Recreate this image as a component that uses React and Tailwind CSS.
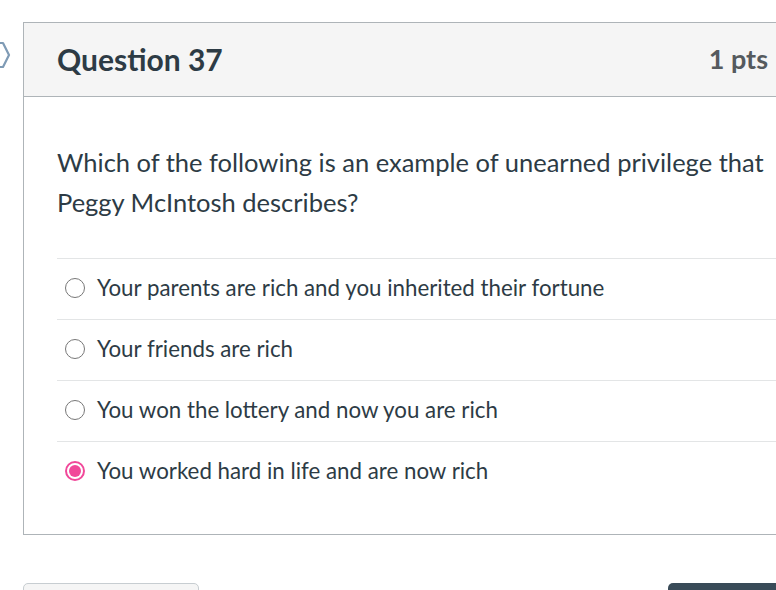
import { useState } from 'react'

const answers = [
  'Your parents are rich and you inherited their fortune',
  'Your friends are rich',
  'You won the lottery and now you are rich',
  'You worked hard in life and are now rich',
]

function Radio({ checked }) {
  return checked ? (
    <span className="w-[20px] h-[20px] rounded-full border-2 border-[#f1489a] flex items-center justify-center shrink-0">
      <span className="w-[12px] h-[12px] rounded-full bg-[#f1489a]" />
    </span>
  ) : (
    <span className="w-[20px] h-[20px] rounded-full border border-[#777] bg-white shrink-0" />
  )
}

export default function App() {
  const [picked, setPicked] = useState(3)

  return (
    <div
      className="relative w-[776px] h-[590px] overflow-hidden bg-white text-[#2d3b45]"
      style={{ fontFamily: 'Lato, "Open Sans", sans-serif' }}
    >
      {/* bookmark flag */}
      <svg className="absolute left-[-4px] top-[40px]" width="16" height="30" viewBox="0 0 16 30" fill="none">
        <path d="M2 3 L7 3 L13 15 L7 27 L2 27" stroke="#7f9bb5" strokeWidth="2.2" strokeLinejoin="round" />
      </svg>

      <div className="pt-[22px] pl-[23px]">
        <div className="w-[770px] border-l border-t border-b border-[#aeb4b8]">
          {/* header */}
          <div className="h-[74px] bg-[#f5f5f5] border-b border-[#aeb4b8] flex items-center justify-between pl-[33px] pr-[25px]">
            <h2 className="text-[30px] font-bold text-[#2d3b45]">Question 37</h2>
            <span className="text-[27px] font-bold text-[#555a5e]">1 pts</span>
          </div>

          {/* body */}
          <div className="pl-[33px] pt-[45px] pb-[32px]">
            <p className="text-[25.5px] leading-[40px] whitespace-nowrap">
              Which of the following is an example of unearned privilege that
              <br />
              Peggy McIntosh describes?
            </p>

            <div className="mt-[36px]">
              {answers.map((a, i) => (
                <label
                  key={i}
                  onClick={() => setPicked(i)}
                  className="h-[61px] border-t border-[#e3e5e6] flex items-center gap-[12px] pl-[8px] pb-[2px] cursor-pointer"
                >
                  <Radio checked={picked === i} />
                  <span className="text-[22.3px] text-[#2d3b45]">{a}</span>
                </label>
              ))}
            </div>
          </div>
        </div>
      </div>

      {/* footer buttons (cut off) */}
      <div className="absolute left-[23px] top-[583px] w-[176px] h-[20px] rounded-[5px] border border-[#c7cdd1] bg-[#f5f5f5]" />
      <div className="absolute left-[668px] top-[583px] w-[120px] h-[20px] rounded-[5px] bg-[#394b58]" />
    </div>
  )
}
